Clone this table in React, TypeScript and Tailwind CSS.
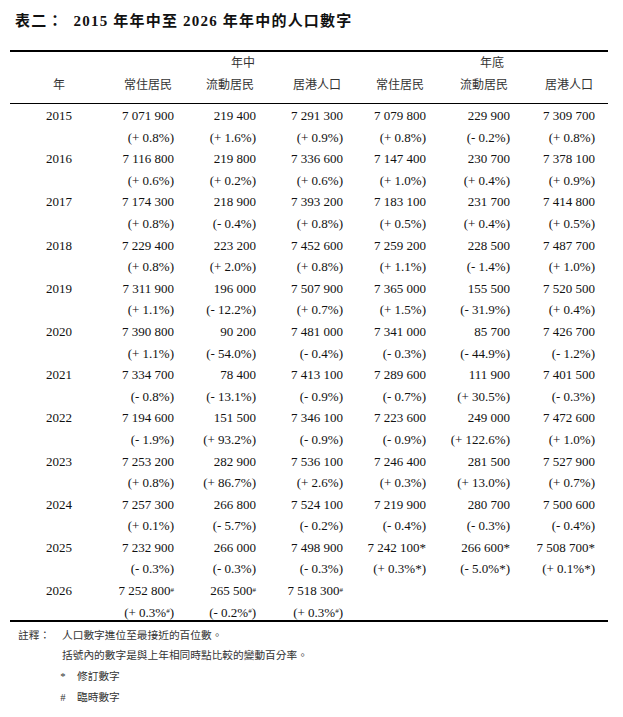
const cols = "grid grid-cols-[98px_66px_82px_87px_83px_84px_85px]";

type Cell = { v: string; p: string; mark?: "*" | "#" };

const rows: { year: string; cells: Cell[] }[] = [
  { year: "2015", cells: [
    { v: "7 071 900", p: "+ 0.8" }, { v: "219 400", p: "+ 1.6" }, { v: "7 291 300", p: "+ 0.9" },
    { v: "7 079 800", p: "+ 0.8" }, { v: "229 900", p: "- 0.2" }, { v: "7 309 700", p: "+ 0.8" } ] },
  { year: "2016", cells: [
    { v: "7 116 800", p: "+ 0.6" }, { v: "219 800", p: "+ 0.2" }, { v: "7 336 600", p: "+ 0.6" },
    { v: "7 147 400", p: "+ 1.0" }, { v: "230 700", p: "+ 0.4" }, { v: "7 378 100", p: "+ 0.9" } ] },
  { year: "2017", cells: [
    { v: "7 174 300", p: "+ 0.8" }, { v: "218 900", p: "- 0.4" }, { v: "7 393 200", p: "+ 0.8" },
    { v: "7 183 100", p: "+ 0.5" }, { v: "231 700", p: "+ 0.4" }, { v: "7 414 800", p: "+ 0.5" } ] },
  { year: "2018", cells: [
    { v: "7 229 400", p: "+ 0.8" }, { v: "223 200", p: "+ 2.0" }, { v: "7 452 600", p: "+ 0.8" },
    { v: "7 259 200", p: "+ 1.1" }, { v: "228 500", p: "- 1.4" }, { v: "7 487 700", p: "+ 1.0" } ] },
  { year: "2019", cells: [
    { v: "7 311 900", p: "+ 1.1" }, { v: "196 000", p: "- 12.2" }, { v: "7 507 900", p: "+ 0.7" },
    { v: "7 365 000", p: "+ 1.5" }, { v: "155 500", p: "- 31.9" }, { v: "7 520 500", p: "+ 0.4" } ] },
  { year: "2020", cells: [
    { v: "7 390 800", p: "+ 1.1" }, { v: "90 200", p: "- 54.0" }, { v: "7 481 000", p: "- 0.4" },
    { v: "7 341 000", p: "- 0.3" }, { v: "85 700", p: "- 44.9" }, { v: "7 426 700", p: "- 1.2" } ] },
  { year: "2021", cells: [
    { v: "7 334 700", p: "- 0.8" }, { v: "78 400", p: "- 13.1" }, { v: "7 413 100", p: "- 0.9" },
    { v: "7 289 600", p: "- 0.7" }, { v: "111 900", p: "+ 30.5" }, { v: "7 401 500", p: "- 0.3" } ] },
  { year: "2022", cells: [
    { v: "7 194 600", p: "- 1.9" }, { v: "151 500", p: "+ 93.2" }, { v: "7 346 100", p: "- 0.9" },
    { v: "7 223 600", p: "- 0.9" }, { v: "249 000", p: "+ 122.6" }, { v: "7 472 600", p: "+ 1.0" } ] },
  { year: "2023", cells: [
    { v: "7 253 200", p: "+ 0.8" }, { v: "282 900", p: "+ 86.7" }, { v: "7 536 100", p: "+ 2.6" },
    { v: "7 246 400", p: "+ 0.3" }, { v: "281 500", p: "+ 13.0" }, { v: "7 527 900", p: "+ 0.7" } ] },
  { year: "2024", cells: [
    { v: "7 257 300", p: "+ 0.1" }, { v: "266 800", p: "- 5.7" }, { v: "7 524 100", p: "- 0.2" },
    { v: "7 219 900", p: "- 0.4" }, { v: "280 700", p: "- 0.3" }, { v: "7 500 600", p: "- 0.4" } ] },
  { year: "2025", cells: [
    { v: "7 232 900", p: "- 0.3" }, { v: "266 000", p: "- 0.3" }, { v: "7 498 900", p: "- 0.3" },
    { v: "7 242 100", p: "+ 0.3", mark: "*" }, { v: "266 600", p: "- 5.0", mark: "*" }, { v: "7 508 700", p: "+ 0.1", mark: "*" } ] },
  { year: "2026", cells: [
    { v: "7 252 800", p: "+ 0.3", mark: "#" }, { v: "265 500", p: "- 0.2", mark: "#" }, { v: "7 518 300", p: "+ 0.3", mark: "#" } ] },
];

const Mark = ({ m }: { m?: "*" | "#" }) => {
  if (!m) return null;
  if (m === "*") return <span>*</span>;
  return <sup className="text-[7px]">#</sup>;
};

const heads = ["常住居民", "流動居民", "居港人口", "常住居民", "流動居民", "居港人口"];

export default function App() {
  return (
    <div className="w-[623px] h-[717px] bg-white text-[#111] font-['Liberation_Serif','Noto_Sans_CJK_TC',serif] overflow-hidden">
      <div className="pt-[11px] pl-[15px] leading-[20px] text-[15px] font-bold tracking-[1.2px]">
        <span className="mr-[10px]">表二：</span>
        2015 年年中至 2026 年年中的人口數字
      </div>

      <div className="ml-[10px] mt-[19px] w-[598px]">
        <div className="h-[1.5px] bg-black" />

        <div className="text-[12px] text-[#333] font-['Noto_Sans_CJK_TC',sans-serif]">
          <div className={`${cols} h-[20px] leading-[20px]`}>
            <div />
            <div />
            <div className="text-right pr-[1px]">年中</div>
            <div />
            <div />
            <div className="text-right pr-[6px]">年底</div>
            <div />
          </div>
          <div className={`${cols} h-[23px] leading-[23px] mb-[8px]`}>
            <div className="text-center">年</div>
            {heads.map((h, i) => (
              <div key={i} className="text-right pr-[2px] whitespace-nowrap">{h}</div>
            ))}
          </div>
        </div>

        <div className="h-[1.5px] bg-black" />

        <div className="h-[516px] pt-[1px] text-[13px] leading-[21.6px]">
          {rows.map((r) => (
            <div key={r.year}>
              <div className={cols}>
                <div className="text-center">{r.year}</div>
                {r.cells.map((c, i) => (
                  <div key={i} className="text-right whitespace-nowrap">
                    {c.v}
                    <Mark m={c.mark} />
                  </div>
                ))}
              </div>
              <div className={cols}>
                <div />
                {r.cells.map((c, i) => (
                  <div key={i} className="text-right whitespace-nowrap">
                    ({c.p}%
                    <Mark m={c.mark} />)
                  </div>
                ))}
              </div>
            </div>
          ))}
        </div>

        <div className="h-[1.5px] bg-black" />
      </div>

      <div className="pt-[3px] text-[10.7px] leading-[20.7px] text-[#333] font-['Noto_Sans_CJK_TC',sans-serif]">
        <div className="flex">
          <span className="w-[62px] pl-[18px] shrink-0">註釋：</span>
          <span>人口數字進位至最接近的百位數。</span>
        </div>
        <div className="pl-[62px]">括號內的數字是與上年相同時點比較的變動百分率。</div>
        <div className="flex">
          <span className="w-[10px] ml-[58px] text-center font-['Liberation_Serif',serif]">*</span>
          <span className="ml-[9px]">修訂數字</span>
        </div>
        <div className="flex">
          <span className="w-[10px] ml-[58px] text-center font-['Liberation_Serif',serif]">#</span>
          <span className="ml-[9px]">臨時數字</span>
        </div>
      </div>
    </div>
  );
}
